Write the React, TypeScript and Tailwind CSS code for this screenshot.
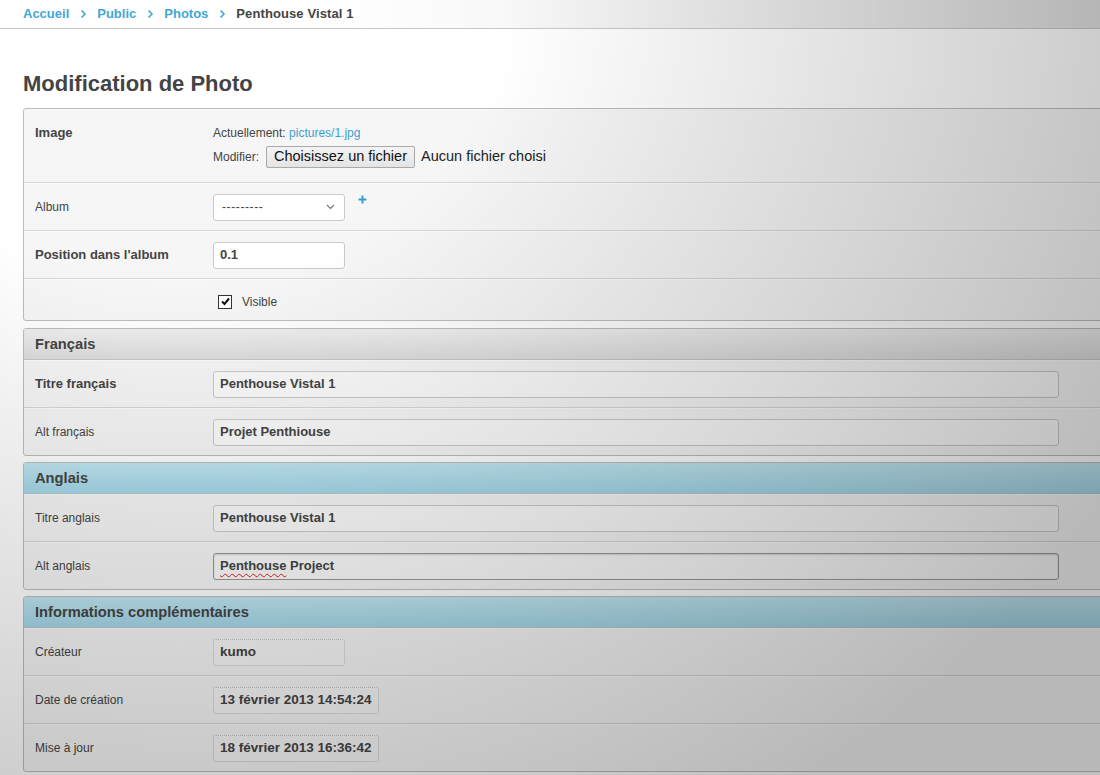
import React from "react";

const FONT = "font-['Liberation_Sans',Arial,Helvetica,sans-serif]";

function Chevron() {
  return (
    <svg width="7" height="10" viewBox="0 0 7 10" className="ml-[11px] mr-[10px] shrink-0">
      <path d="M1.5 1.5 L5 5 L1.5 8.5" fill="none" stroke="#3fa7d6" strokeWidth="1.6" />
    </svg>
  );
}

function Breadcrumbs() {
  return (
    <div className="h-[29px] border-b border-[#c9c9c9] bg-gradient-to-r from-white from-30% to-[#e2e2e2] flex items-center pl-[23px] text-[13px] font-bold">
      <span className="text-[#3fa7d6]">Accueil</span>
      <Chevron />
      <span className="text-[#3fa7d6]">Public</span>
      <Chevron />
      <span className="text-[#3fa7d6]">Photos</span>
      <Chevron />
      <span className="text-[#444] tracking-[0.1px]">Penthouse Vistal 1</span>
    </div>
  );
}

function Row({
  label,
  bold,
  className = "h-[48px] items-center",
  children,
}: {
  label?: string;
  bold?: boolean;
  className?: string;
  children?: React.ReactNode;
}) {
  return (
    <div className={`flex border-t border-t-[#fdfdfd] border-b border-b-[#d6d6d6] last:border-b-0 ${className}`}>
      <div
        className={`w-[189px] shrink-0 pl-[11px] text-[#444] ${bold ? "text-[13px] font-bold" : "text-[12px]"}`}
      >
        {label}
      </div>
      <div className="flex-1">{children}</div>
    </div>
  );
}

function Panel({ children }: { children: React.ReactNode }) {
  return (
    <div className="ml-[23px] w-[1120px] border border-[#bdbdbd] rounded-[3px] bg-[#f6f6f6] overflow-hidden shadow-[0_1px_0_#ffffff]">
      {children}
    </div>
  );
}

function Header({ title, blue }: { title: string; blue?: boolean }) {
  return (
    <div
      className={`h-[31px] flex items-center pl-[11px] border-b text-[14.7px] font-bold text-[#444] ${
        blue
          ? "bg-gradient-to-b from-[#c0e7f3] to-[#a4d7e8] border-b-[#b9c9cf]"
          : "bg-gradient-to-b from-[#efefef] to-[#dcdcdc] border-b-[#c6c6c6]"
      }`}
    >
      {title}
    </div>
  );
}

function TextBox({ children, focused }: { children: React.ReactNode; focused?: boolean }) {
  return (
    <div
      className={`w-[846px] h-[27px] rounded-[3px] bg-[#fbfbfb] flex items-center pl-[6px] text-[13px] font-bold text-[#444] ${
        focused
          ? "border border-[#9a9a9a] shadow-[inset_0_1px_2px_rgba(0,0,0,0.15)]"
          : "border border-[#cacaca]"
      }`}
    >
      {children}
    </div>
  );
}

function ReadOnly({ children, fixed }: { children: React.ReactNode; fixed?: boolean }) {
  return (
    <div
      className={`h-[27px] inline-flex items-center px-[6px] rounded-[3px] border border-dotted border-[#c2c2c2] bg-[#f8f8f8] text-[13.5px] font-bold text-[#444] ${
        fixed ? "w-[132px]" : ""
      }`}
    >
      {children}
    </div>
  );
}

export default function App() {
  return (
    <div className={`relative w-[1100px] h-[775px] overflow-hidden bg-white ${FONT}`}>
      <Breadcrumbs />

      <h1 className="mt-[42px] mb-[11px] ml-[23px] text-[22px] leading-[26px] font-bold text-[#444]">
        Modification de Photo
      </h1>

      {/* Photo fields */}
      <Panel>
        <Row label="Image" bold className="h-[74px] items-start pt-[14px] border-t-0">
          <div className="mt-[2px] text-[12px] leading-[16px] text-[#444]">
            Actuellement: <span className="text-[#3fa0cd]">pictures/1.jpg</span>
          </div>
          <div className="mt-[5px] flex items-center text-[12px] text-[#444]">
            <span>Modifier:</span>
            <span className="ml-[7px] h-[22px] px-[7px] flex items-center border border-[#a9a9a9] rounded-[2px] bg-gradient-to-b from-[#f4f4f4] to-[#e4e4e4] text-[14.5px] text-[#111]">
              Choisissez un fichier
            </span>
            <span className="ml-[6px] text-[14.5px] text-[#222]">Aucun fichier choisi</span>
          </div>
        </Row>
        <Row label="Album">
          <div className="flex items-start">
            <div className="w-[132px] h-[27px] rounded-[3px] border border-[#cacaca] bg-white flex items-center justify-between pl-[8px] pr-[9px]">
              <span className="text-[12px] text-[#444] tracking-[0.6px]">---------</span>
              <svg width="9" height="6" viewBox="0 0 9 6">
                <path d="M1 1 L4.5 4.5 L8 1" fill="none" stroke="#777" strokeWidth="1.2" />
              </svg>
            </div>
            <svg width="9" height="9" viewBox="0 0 9 9" className="ml-[13px] mt-[1px]">
              <path d="M4.5 0.5 V8.5 M0.5 4.5 H8.5" stroke="#3a9fcb" strokeWidth="2" />
            </svg>
          </div>
        </Row>
        <Row label="Position dans l'album" bold>
          <div className="w-[132px] h-[27px] rounded-[3px] border border-[#cacaca] bg-white flex items-center pl-[6px] text-[13px] font-bold text-[#444]">
            0.1
          </div>
        </Row>
        <Row className="h-[41px] items-center pt-[3px]">
          <div className="flex items-center pl-[5px]">
            <span className="w-[14px] h-[14px] border border-[#333] bg-white flex items-center justify-center">
              <svg width="11" height="11" viewBox="0 0 11 11">
                <path d="M2 5.5 L4.5 8 L9 2.5" fill="none" stroke="#111" strokeWidth="2" />
              </svg>
            </span>
            <span className="ml-[10px] text-[12px] text-[#444]">Visible</span>
          </div>
        </Row>
      </Panel>

      <div className="h-[7px]" />

      {/* French texts */}
      <Panel>
        <Header title="Français" />
        <Row label="Titre français" bold>
          <TextBox>Penthouse Vistal 1</TextBox>
        </Row>
        <Row label="Alt français" className="h-[47px] items-center">
          <TextBox>Projet Penthiouse</TextBox>
        </Row>
      </Panel>

      <div className="h-[6px]" />

      {/* English texts */}
      <Panel>
        <Header title="Anglais" blue />
        <Row label="Titre anglais">
          <TextBox>Penthouse Vistal 1</TextBox>
        </Row>
        <Row label="Alt anglais" className="h-[47px] items-center">
          <TextBox focused>
            <span className="underline decoration-wavy decoration-[#e02020] decoration-1 underline-offset-[3px]">
              Penthouse
            </span>
            &nbsp;Project
          </TextBox>
        </Row>
      </Panel>

      <div className="h-[6px]" />

      {/* Extra info */}
      <Panel>
        <Header title="Informations complémentaires" blue />
        <Row label="Créateur">
          <ReadOnly fixed>kumo</ReadOnly>
        </Row>
        <Row label="Date de création">
          <ReadOnly>13 février 2013 14:54:24</ReadOnly>
        </Row>
        <Row label="Mise à jour" className="h-[47px] items-center">
          <ReadOnly>18 février 2013 16:36:42</ReadOnly>
        </Row>
      </Panel>

      {/* soft lighting across the page */}
      <div className="pointer-events-none absolute inset-0 bg-[radial-gradient(ellipse_1150px_1000px_at_180px_0px,rgba(0,0,0,0)_28%,rgba(0,0,0,0.25)_95%)]" />
    </div>
  );
}
